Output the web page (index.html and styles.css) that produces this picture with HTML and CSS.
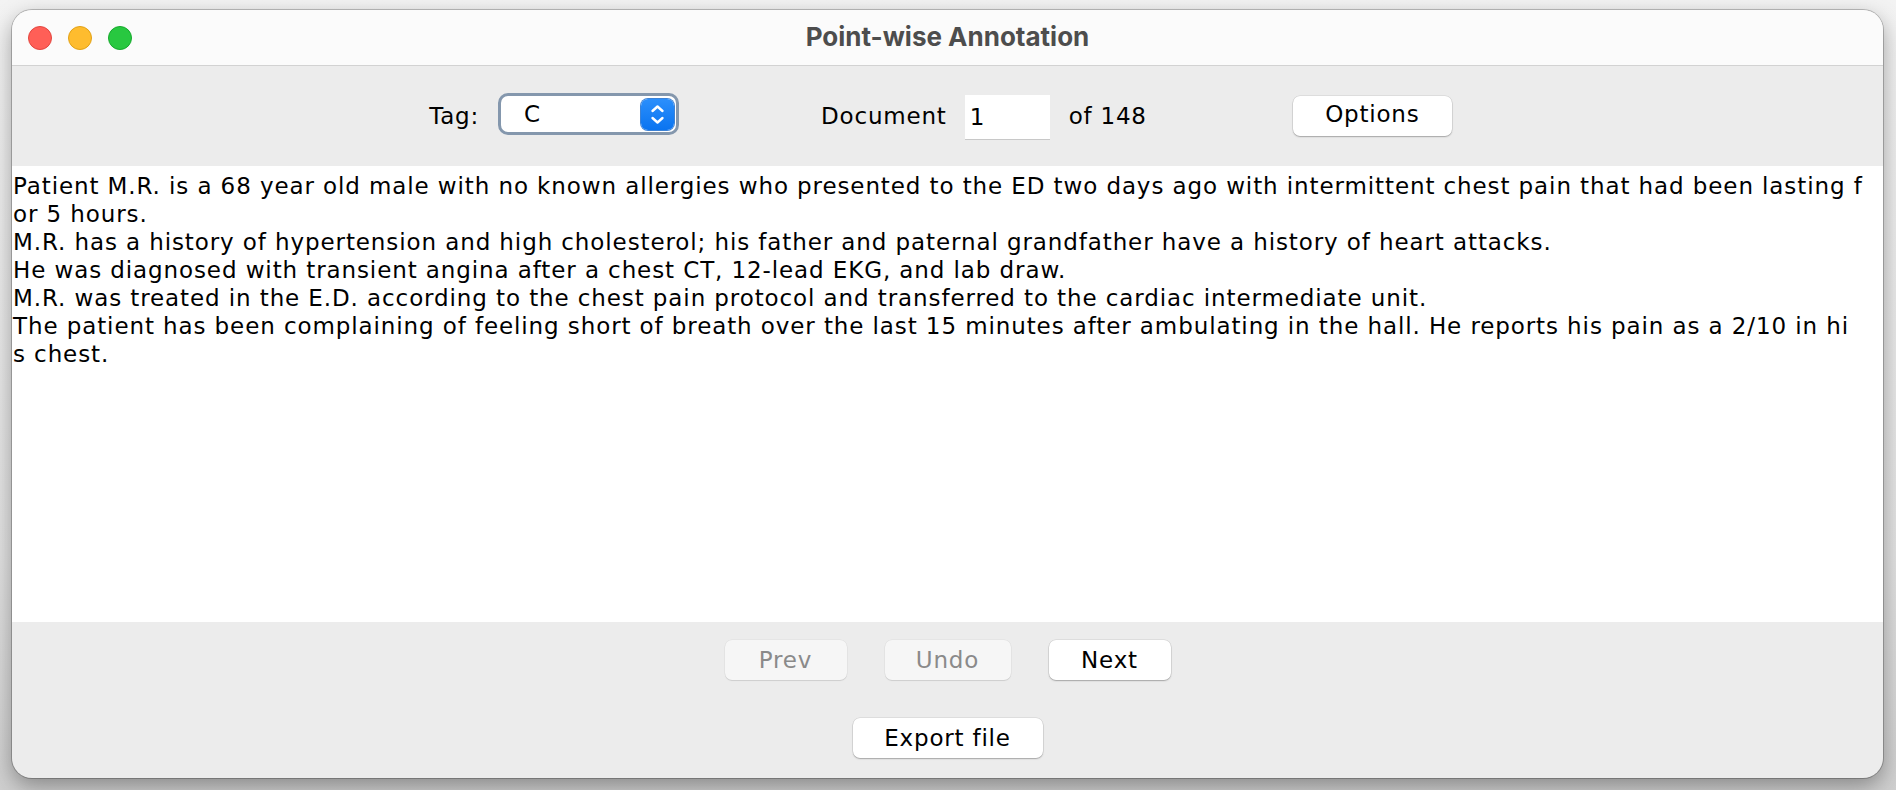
FILE: index.html
```html
<!DOCTYPE html>
<html>
<head>
<meta charset="utf-8">
<link rel="stylesheet" href="styles.css">
</head>
<body>
<div class="window">
  <div class="titlebar">
    <div class="lights">
      <span class="light red"></span>
      <span class="light yellow"></span>
      <span class="light green"></span>
    </div>
    <div class="title">Point-wise Annotation</div>
  </div>
  <div class="toolbar">
    <span class="label">Tag:</span>
    <div class="select">
      <span class="select-value">C</span>
      <span class="stepper">
        <svg width="33" height="31" viewBox="0 0 33 31">
          <path d="M11.5 12 L16.5 7.5 L21.5 12" fill="none" stroke="#fff" stroke-width="2.4" stroke-linecap="round" stroke-linejoin="round"/>
          <path d="M11.5 19 L16.5 23.5 L21.5 19" fill="none" stroke="#fff" stroke-width="2.4" stroke-linecap="round" stroke-linejoin="round"/>
        </svg>
      </span>
    </div>
    <span class="label doc-label">Document</span>
    <div class="docinput">1</div>
    <span class="label of-label">of 148</span>
    <button class="btn options">Options</button>
  </div>
  <div class="textarea">
    <div class="line">Patient M.R. is a 68 year old male with no known allergies who presented to the ED two days ago with intermittent chest pain that had been lasting f</div>
    <div class="line">or 5 hours.</div>
    <div class="line">M.R. has a history of hypertension and high cholesterol; his father and paternal grandfather have a history of heart attacks.</div>
    <div class="line">He was diagnosed with transient angina after a chest CT, 12-lead EKG, and lab draw.</div>
    <div class="line">M.R. was treated in the E.D. according to the chest pain protocol and transferred to the cardiac intermediate unit.</div>
    <div class="line">The patient has been complaining of feeling short of breath over the last 15 minutes after ambulating in the hall. He reports his pain as a 2/10 in hi</div>
    <div class="line">s chest.</div>
  </div>
  <div class="bottom">
    <div class="navrow">
      <button class="btn nav disabled">Prev</button>
      <button class="btn nav disabled undo">Undo</button>
      <button class="btn nav">Next</button>
    </div>
    <div class="exportrow">
      <button class="btn export">Export file</button>
    </div>
  </div>
</div>
</body>
</html>
```

FILE: styles.css
```css
html, body {
  margin: 0;
  height: 100%;
}
body {
  background: linear-gradient(to bottom, #f3f3f3 0%, #e2e2e2 70%, #cfcfcf 100%);
  padding: 10px 13px 12px 12px;
  box-sizing: border-box;
  font-family: "DejaVu Sans", "Liberation Sans", sans-serif;
  overflow: hidden;
}
.window {
  height: 768px;
  border-radius: 20px;
  overflow: hidden;
  display: flex;
  flex-direction: column;
  background: #ececec;
  box-shadow: 0 0 0 1px rgba(0,0,0,0.22), 0 8px 22px rgba(0,0,0,0.35);
}
.titlebar {
  height: 55px;
  flex: none;
  background: #fbfbfb;
  border-bottom: 1px solid #d2d2d2;
  display: flex;
  align-items: center;
  position: relative;
}
.lights {
  display: flex;
  gap: 16px;
  padding-left: 16px;
}
.light {
  width: 24px;
  height: 24px;
  border-radius: 50%;
  box-sizing: border-box;
}
.red { background: #ff5f57; border: 1px solid #e2463f; }
.yellow { background: #febc2e; border: 1px solid #e1a116; }
.green { background: #28c840; border: 1px solid #16a92c; }
.title {
  position: absolute;
  left: 0;
  right: 0;
  top: 0;
  bottom: 0;
  display: flex;
  align-items: center;
  justify-content: center;
  font-family: "Inter", "Liberation Sans", sans-serif;
  font-weight: 700;
  font-size: 26px;
  color: #4d4d4d;
  padding-bottom: 2px;
}
.toolbar {
  height: 100px;
  flex: none;
  display: flex;
  align-items: center;
  justify-content: center;
  padding-right: 14px;
  box-sizing: border-box;
  font-size: 23px;
  letter-spacing: 0.8px;
  color: #000;
}
.label {
  white-space: nowrap;
}
.select {
  margin-left: 19px;
  width: 181px;
  height: 42px;
  box-sizing: border-box;
  border: 3px solid #8497ad;
  border-radius: 10px;
  background: #fff;
  display: flex;
  align-items: center;
  justify-content: space-between;
  padding: 0 2px 0 23px;
  margin-top: -4px;
}
.select-value {
  font-size: 23px;
}
.stepper {
  width: 33px;
  height: 31px;
  border-radius: 7px;
  background: linear-gradient(to bottom, #2b8ffc, #0a74f0);
  box-shadow: 0 0 0 1px #3c82d6;
  display: flex;
}
.doc-label {
  margin-left: 142px;
}
.docinput {
  margin-left: 18px;
  width: 85px;
  height: 45px;
  box-sizing: border-box;
  background: #fff;
  border-bottom: 1px solid #c8c8c8;
  padding-left: 5px;
  display: flex;
  align-items: center;
  font-size: 23px;
  margin-top: 3px;
}
.of-label {
  margin-left: 19px;
}
.btn {
  font-family: "DejaVu Sans", "Liberation Sans", sans-serif;
  font-size: 23px;
  letter-spacing: 0.8px;
  color: #000;
  background: #fff;
  border: none;
  border-radius: 7px;
  box-shadow: 0 0 0 0.5px rgba(0,0,0,0.12), 0 1px 1.5px rgba(0,0,0,0.25);
  height: 40px;
  padding: 0;
  display: flex;
  align-items: center;
  justify-content: center;
}
.options {
  margin-left: 146px;
  width: 159px;
  padding-bottom: 4px;
}
.textarea {
  height: 456px;
  flex: none;
  background: #fff;
  padding: 6px 0 0 1px;
  box-sizing: border-box;
  font-size: 23px;
  letter-spacing: 0.9px;
  line-height: 28px;
  color: #000;
}
.line {
  white-space: pre;
}
.bottom {
  flex: 1;
  display: flex;
  flex-direction: column;
  align-items: center;
  padding-top: 18px;
  box-sizing: border-box;
}
.navrow {
  display: flex;
  gap: 38px;
}
.nav {
  width: 122px;
}
.undo {
  width: 126px;
}
.disabled {
  background: #f6f6f6;
  color: #8a8a8a;
  box-shadow: 0 0 0 0.5px rgba(0,0,0,0.06), 0 1px 1px rgba(0,0,0,0.1);
}
.exportrow {
  margin-top: 38px;
}
.export {
  width: 190px;
}
```
